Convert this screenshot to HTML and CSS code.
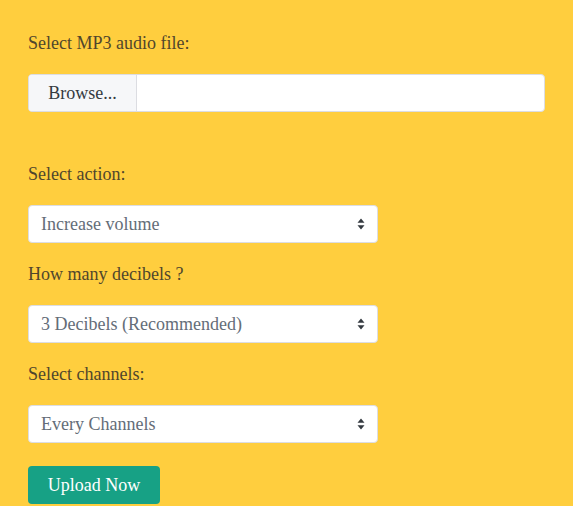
FILE: index.html
```html
<!DOCTYPE html>
<html>
<head>
<meta charset="utf-8">
<link rel="stylesheet" href="styles.css">
</head>
<body>
<form class="form">
  <label class="lbl">Select MP3 audio file:</label>
  <div class="file">
    <span class="browse">Browse...</span>
    <span class="file-name"></span>
  </div>

  <label class="lbl lbl-gap">Select action:</label>
  <div class="sel">
    <select class="sel-input"><option>Increase volume</option></select>
    <svg class="arrows" width="8" height="12" viewBox="0 0 8 12"><path d="M4 0.5 L7.5 4.8 H0.5 Z M4 11.5 L7.5 7.2 H0.5 Z" fill="#343a40"/></svg>
  </div>

  <label class="lbl">How many decibels ?</label>
  <div class="sel">
    <select class="sel-input"><option>3 Decibels (Recommended)</option></select>
    <svg class="arrows" width="8" height="12" viewBox="0 0 8 12"><path d="M4 0.5 L7.5 4.8 H0.5 Z M4 11.5 L7.5 7.2 H0.5 Z" fill="#343a40"/></svg>
  </div>

  <label class="lbl">Select channels:</label>
  <div class="sel">
    <select class="sel-input"><option>Every Channels</option></select>
    <svg class="arrows" width="8" height="12" viewBox="0 0 8 12"><path d="M4 0.5 L7.5 4.8 H0.5 Z M4 11.5 L7.5 7.2 H0.5 Z" fill="#343a40"/></svg>
  </div>

  <button type="button" class="btn">Upload Now</button>
</form>
</body>
</html>
```

FILE: styles.css
```css
html, body {
  margin: 0;
  padding: 0;
  background: #ffce3e;
}
body {
  font-family: "Liberation Serif", "DejaVu Serif", serif;
  font-size: 18px;
  line-height: 24px;
}
.form {
  display: flex;
  flex-direction: column;
  align-items: flex-start;
  padding: 31px 28px 0 28px;
}
.lbl {
  display: block;
  color: #50462c;
  height: 24px;
  margin-bottom: 19px;
}
.lbl-gap {
  margin-top: 50px;
}
.file {
  display: flex;
  width: 517px;
  height: 38px;
  box-sizing: border-box;
  border: 1px solid #dcdde2;
  border-radius: 4px;
  background: #fff;
  overflow: hidden;
}
.browse {
  width: 108px;
  flex: none;
  background: #f6f7f9;
  border-right: 1px solid #dcdde2;
  color: #343a40;
  text-align: center;
  line-height: 36px;
  box-sizing: border-box;
}
.file-name {
  flex: 1;
}
.sel {
  position: relative;
  width: 350px;
  height: 38px;
  margin-bottom: 19px;
}
.sel-input {
  -webkit-appearance: none;
  appearance: none;
  width: 100%;
  height: 38px;
  box-sizing: border-box;
  border: 1px solid #dcdde2;
  border-radius: 4px;
  background: #fff;
  color: #646d78;
  font-family: inherit;
  font-size: 18px;
  padding: 0 12px;
  margin: 0;
  outline: none;
}
.arrows {
  position: absolute;
  right: 13px;
  top: 13px;
}
.btn {
  margin-top: 4px;
  width: 132px;
  height: 38px;
  border: none;
  border-radius: 4px;
  background: #17a185;
  color: #fff;
  font-family: inherit;
  font-size: 18px;
  padding: 0;
}
```
